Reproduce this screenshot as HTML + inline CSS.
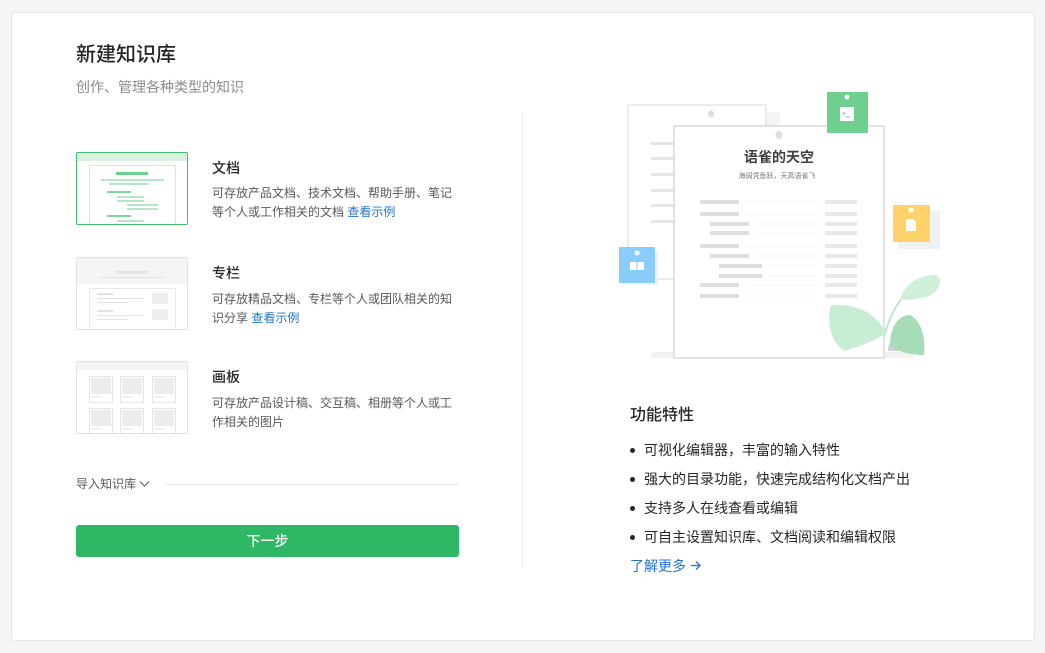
<!DOCTYPE html>
<html><head><meta charset="utf-8"><style>
*{margin:0;padding:0;box-sizing:border-box}
body{width:1045px;height:653px;background:#f5f5f5;font-family:"Liberation Sans","Noto Sans CJK SC",sans-serif;position:relative;overflow:hidden;color:#262626}
.card{position:absolute;left:11px;top:12px;width:1024px;height:629px;background:#fff;border:1px solid #e5e5e5;border-radius:4px}
.a{position:absolute}
h1{position:absolute;left:76px;top:38px;font-size:20px;font-weight:500;color:#262626}
.sub{left:76px;top:77px;font-size:14px;color:#8c8c8c}
.th{position:absolute;left:76px;width:112px;height:73px;border:1px solid #e0e0e0;border-radius:2px;overflow:hidden;background:#fff}
.tt{position:absolute;left:212px;font-size:14px;font-weight:500;color:#262626}
.ds{position:absolute;left:212px;width:250px;font-size:12px;line-height:19px;color:#595959}
.ds a{color:#1f74d6;text-decoration:none}
.b{position:absolute;background:#e3e3e3}
.g{position:absolute;background:#b6e7c6}
ul{position:absolute;left:630px;top:440px;list-style:none;font-size:14px;color:#262626}
ul li{height:29px;line-height:20px;padding-left:14px;position:relative}
ul li:before{content:"";position:absolute;left:0;top:8px;width:5px;height:5px;border-radius:50%;background:#262626}
</style></head><body>
<div class="card"></div>
<h1>新建知识库</h1>
<div class="a sub">创作、管理各种类型的知识</div>

<div class="th" style="top:152px;border-color:#3cbd6d">
 <div class="a" style="left:0;top:0;width:112px;height:8px;background:#daf1e1"></div>
 <div class="a" style="left:12px;top:12px;width:87px;height:62px;border:1px solid #cdeed8"></div>
 <div class="a" style="left:39px;top:19px;width:32px;height:3px;background:#6ed08f"></div>
 <div class="g" style="left:24px;top:26px;width:63px;height:2px"></div>
 <div class="g" style="left:32px;top:30px;width:40px;height:2px"></div>
 <div class="a" style="left:30px;top:38px;width:24px;height:2px;background:#7fd59d"></div>
 <div class="g" style="left:40px;top:43px;width:27px;height:2px"></div>
 <div class="g" style="left:40px;top:47px;width:27px;height:2px"></div>
 <div class="g" style="left:50px;top:51px;width:31px;height:2px"></div>
 <div class="g" style="left:50px;top:55px;width:31px;height:2px"></div>
 <div class="a" style="left:30px;top:62px;width:24px;height:2px;background:#7fd59d"></div>
 <div class="g" style="left:40px;top:67px;width:27px;height:2px"></div>
</div>
<div class="tt" style="top:158px">文档</div>
<div class="ds" style="top:184px">可存放产品文档、技术文档、帮助手册、笔记等个人或工作相关的文档 <a>查看示例</a></div>

<div class="th" style="top:257px">
 <div class="a" style="left:0;top:0;width:112px;height:26px;background:#f4f5f7"></div>
 <div class="b" style="left:39px;top:13px;width:32px;height:3px"></div>
 <div class="b" style="left:24px;top:19px;width:63px;height:1px"></div>
 <div class="a" style="left:12px;top:30px;width:87px;height:45px;border:1px solid #e8e8e8"></div>
 <div class="b" style="left:20px;top:35px;width:16px;height:2px"></div>
 <div class="b" style="left:20px;top:40px;width:47px;height:1px"></div>
 <div class="b" style="left:20px;top:44px;width:31px;height:1px"></div>
 <div class="a" style="left:75px;top:35px;width:16px;height:11px;background:#eee"></div>
 <div class="b" style="left:20px;top:52px;width:16px;height:2px"></div>
 <div class="b" style="left:20px;top:57px;width:47px;height:1px"></div>
 <div class="b" style="left:20px;top:61px;width:31px;height:1px"></div>
 <div class="a" style="left:75px;top:51px;width:16px;height:11px;background:#eee"></div>
</div>
<div class="tt" style="top:263px">专栏</div>
<div class="ds" style="top:290px">可存放精品文档、专栏等个人或团队相关的知识分享 <a>查看示例</a></div>

<div class="th" style="top:361px">
 <div class="a" style="left:0;top:0;width:112px;height:8px;background:#f4f5f7"></div>
 <svg class="a" style="left:0;top:0" width="112" height="73">
  <g fill="#fff" stroke="#e5e5e5">
   <rect x="12.5" y="14.5" width="23" height="26"/><rect x="43.5" y="14.5" width="23" height="26"/><rect x="75.5" y="14.5" width="23" height="26"/>
   <rect x="12.5" y="46.5" width="23" height="26"/><rect x="43.5" y="46.5" width="23" height="26"/><rect x="75.5" y="46.5" width="23" height="26"/>
  </g>
  <g fill="#ececec">
   <rect x="14" y="16" width="20" height="16"/><rect x="45" y="16" width="20" height="16"/><rect x="77" y="16" width="20" height="16"/>
   <rect x="14" y="48" width="20" height="16"/><rect x="45" y="48" width="20" height="16"/><rect x="77" y="48" width="20" height="16"/>
   <rect x="14" y="34" width="10" height="1.5"/><rect x="45" y="34" width="10" height="1.5"/><rect x="77" y="34" width="10" height="1.5"/>
   <rect x="14" y="66" width="10" height="1.5"/><rect x="45" y="66" width="10" height="1.5"/><rect x="77" y="66" width="10" height="1.5"/>
  </g>
 </svg>
</div>
<div class="tt" style="top:367px">画板</div>
<div class="ds" style="top:394px">可存放产品设计稿、交互稿、相册等个人或工作相关的图片</div>

<div class="a" style="left:76px;top:475px;font-size:12px;color:#595959">导入知识库 <svg width="11" height="8" viewBox="0 0 11 8"><path d="M1 1.5l4.5 4.5 4.5-4.5" fill="none" stroke="#595959"/></svg></div>
<div class="a" style="left:166px;top:484px;width:293px;height:1px;background:#e5e5e5"></div>
<div class="a" style="left:76px;top:525px;width:383px;height:32px;background:#2eb764;border-radius:3px;color:#fff;font-size:14px;text-align:center;line-height:32px;font-weight:500">下一步</div>

<div class="a" style="left:522px;top:112px;width:1px;height:456px;background:#ebebeb"></div>

<svg class="a" style="left:600px;top:85px" width="350" height="290">
 <rect x="51" y="267" width="262" height="6" fill="#f2f2f2"/>
 <rect x="35" y="27" width="145" height="168" fill="#f3f4f5"/>
 <rect x="28" y="20" width="138" height="174" fill="#fff" stroke="#e6e6e6" stroke-width="1.5"/>
 <ellipse cx="111" cy="29" rx="3" ry="3.5" fill="#ddd"/>
 <g fill="#e6e6e6"><rect x="51" y="57" width="30" height="3"/><rect x="51" y="72" width="30" height="3"/><rect x="51" y="88" width="30" height="3"/><rect x="51" y="104" width="30" height="3"/><rect x="51" y="119" width="30" height="3"/><rect x="51" y="135" width="30" height="3"/></g>
 <rect x="74" y="41" width="210" height="232" fill="#fff" stroke="#d9dadb" stroke-width="1.5"/>
 <ellipse cx="179" cy="50" rx="3.5" ry="4" fill="#ddd"/>
 <text x="179" y="77" text-anchor="middle" font-size="14" font-weight="bold" fill="#404040" font-family="Liberation Sans,Noto Sans CJK SC,sans-serif">语雀的天空</text>
 <text x="177" y="93" text-anchor="middle" font-size="7" fill="#777" font-family="Liberation Sans,Noto Sans CJK SC,sans-serif">海阔凭鱼跃，天高语雀飞</text>
 <g fill="#dedede">
  <rect x="100" y="115" width="39" height="4"/><rect x="100" y="127" width="39" height="4"/><rect x="110" y="137" width="39" height="4"/><rect x="110" y="146" width="39" height="4"/><rect x="100" y="159" width="39" height="4"/><rect x="110" y="169" width="39" height="4"/><rect x="119" y="179" width="43" height="4"/><rect x="119" y="189" width="43" height="4"/><rect x="100" y="198" width="39" height="4"/><rect x="100" y="209" width="39" height="4"/>
 </g>
 <g fill="#e8e8e8"><rect x="225" y="115" width="32" height="4"/><rect x="225" y="127" width="32" height="4"/><rect x="225" y="137" width="32" height="4"/><rect x="225" y="146" width="32" height="4"/><rect x="225" y="159" width="32" height="4"/><rect x="225" y="169" width="32" height="4"/><rect x="225" y="179" width="32" height="4"/><rect x="225" y="189" width="32" height="4"/><rect x="225" y="198" width="32" height="4"/><rect x="225" y="209" width="32" height="4"/></g>
 <g stroke="#ececec" stroke-dasharray="2 2"><path d="M147 117h70M147 129h70M156 139h62M156 148h62M147 161h70M156 171h62M170 181h48M170 191h48M147 200h70M147 211h70"/></g>
 <rect x="227" y="7" width="41" height="41" fill="#6fcf8f"/><circle cx="247" cy="12" r="2.5" fill="#fff"/>
 <rect x="240" y="22" width="14" height="14" fill="#fff"/><path d="M243 27l2 1.5-2 1.5M246 32h4" stroke="#6fcf8f" fill="none"/>
 <rect x="298" y="126" width="42" height="38" fill="#f0f1f2"/>
 <rect x="293" y="120" width="37" height="37" fill="#ffd36b"/><circle cx="311" cy="125" r="2.5" fill="#fff"/>
 <path d="M306 134h7l3 3v9h-10z" fill="#fff"/>
 <rect x="23" y="167" width="35" height="33" fill="#eef0f2"/>
 <rect x="19" y="162" width="36" height="36" fill="#8acdfc"/><circle cx="37" cy="168" r="2.5" fill="#fff"/>
 <path d="M30 177h14v8H30z" fill="#fff"/><path d="M37 177v8" stroke="#8acdfc"/>
 <path d="M288 266c0-10 6-14 10-14s10 4 10 14z" fill="#cfd0d2"/>
 <path d="M284 252c8-30 20-44 36-58" stroke="#bfe5cc" stroke-width="2" fill="none"/>
 <path d="M286 248c-10-20-30-30-55-28-5 15 0 40 14 46 15-5 30-10 41-18z" fill="#c9ecd4"/>
 <path d="M300 214c5-15 20-25 36-24 10 5 0 20-10 22-10 2-20 4-26 2z" fill="#d0efda"/>
 <path d="M290 260c0-20 10-30 20-30 10 5 16 20 14 40-15 0-25-3-34-10z" fill="#a7dcb8"/>
</svg>

<div class="a" style="left:630px;top:401px;font-size:16px;font-weight:500;color:#262626">功能特性</div>
<ul><li>可视化编辑器，丰富的输入特性</li><li>强大的目录功能，快速完成结构化文档产出</li><li>支持多人在线查看或编辑</li><li>可自主设置知识库、文档阅读和编辑权限</li></ul>
<div class="a" style="left:630px;top:556px;font-size:14px;color:#1f74d6">了解更多 <svg width="12" height="11" viewBox="0 0 12 11"><path d="M1 5.5h9M6 1.5l4 4-4 4" fill="none" stroke="#1f74d6" stroke-width="1.3"/></svg></div>
</body></html>
